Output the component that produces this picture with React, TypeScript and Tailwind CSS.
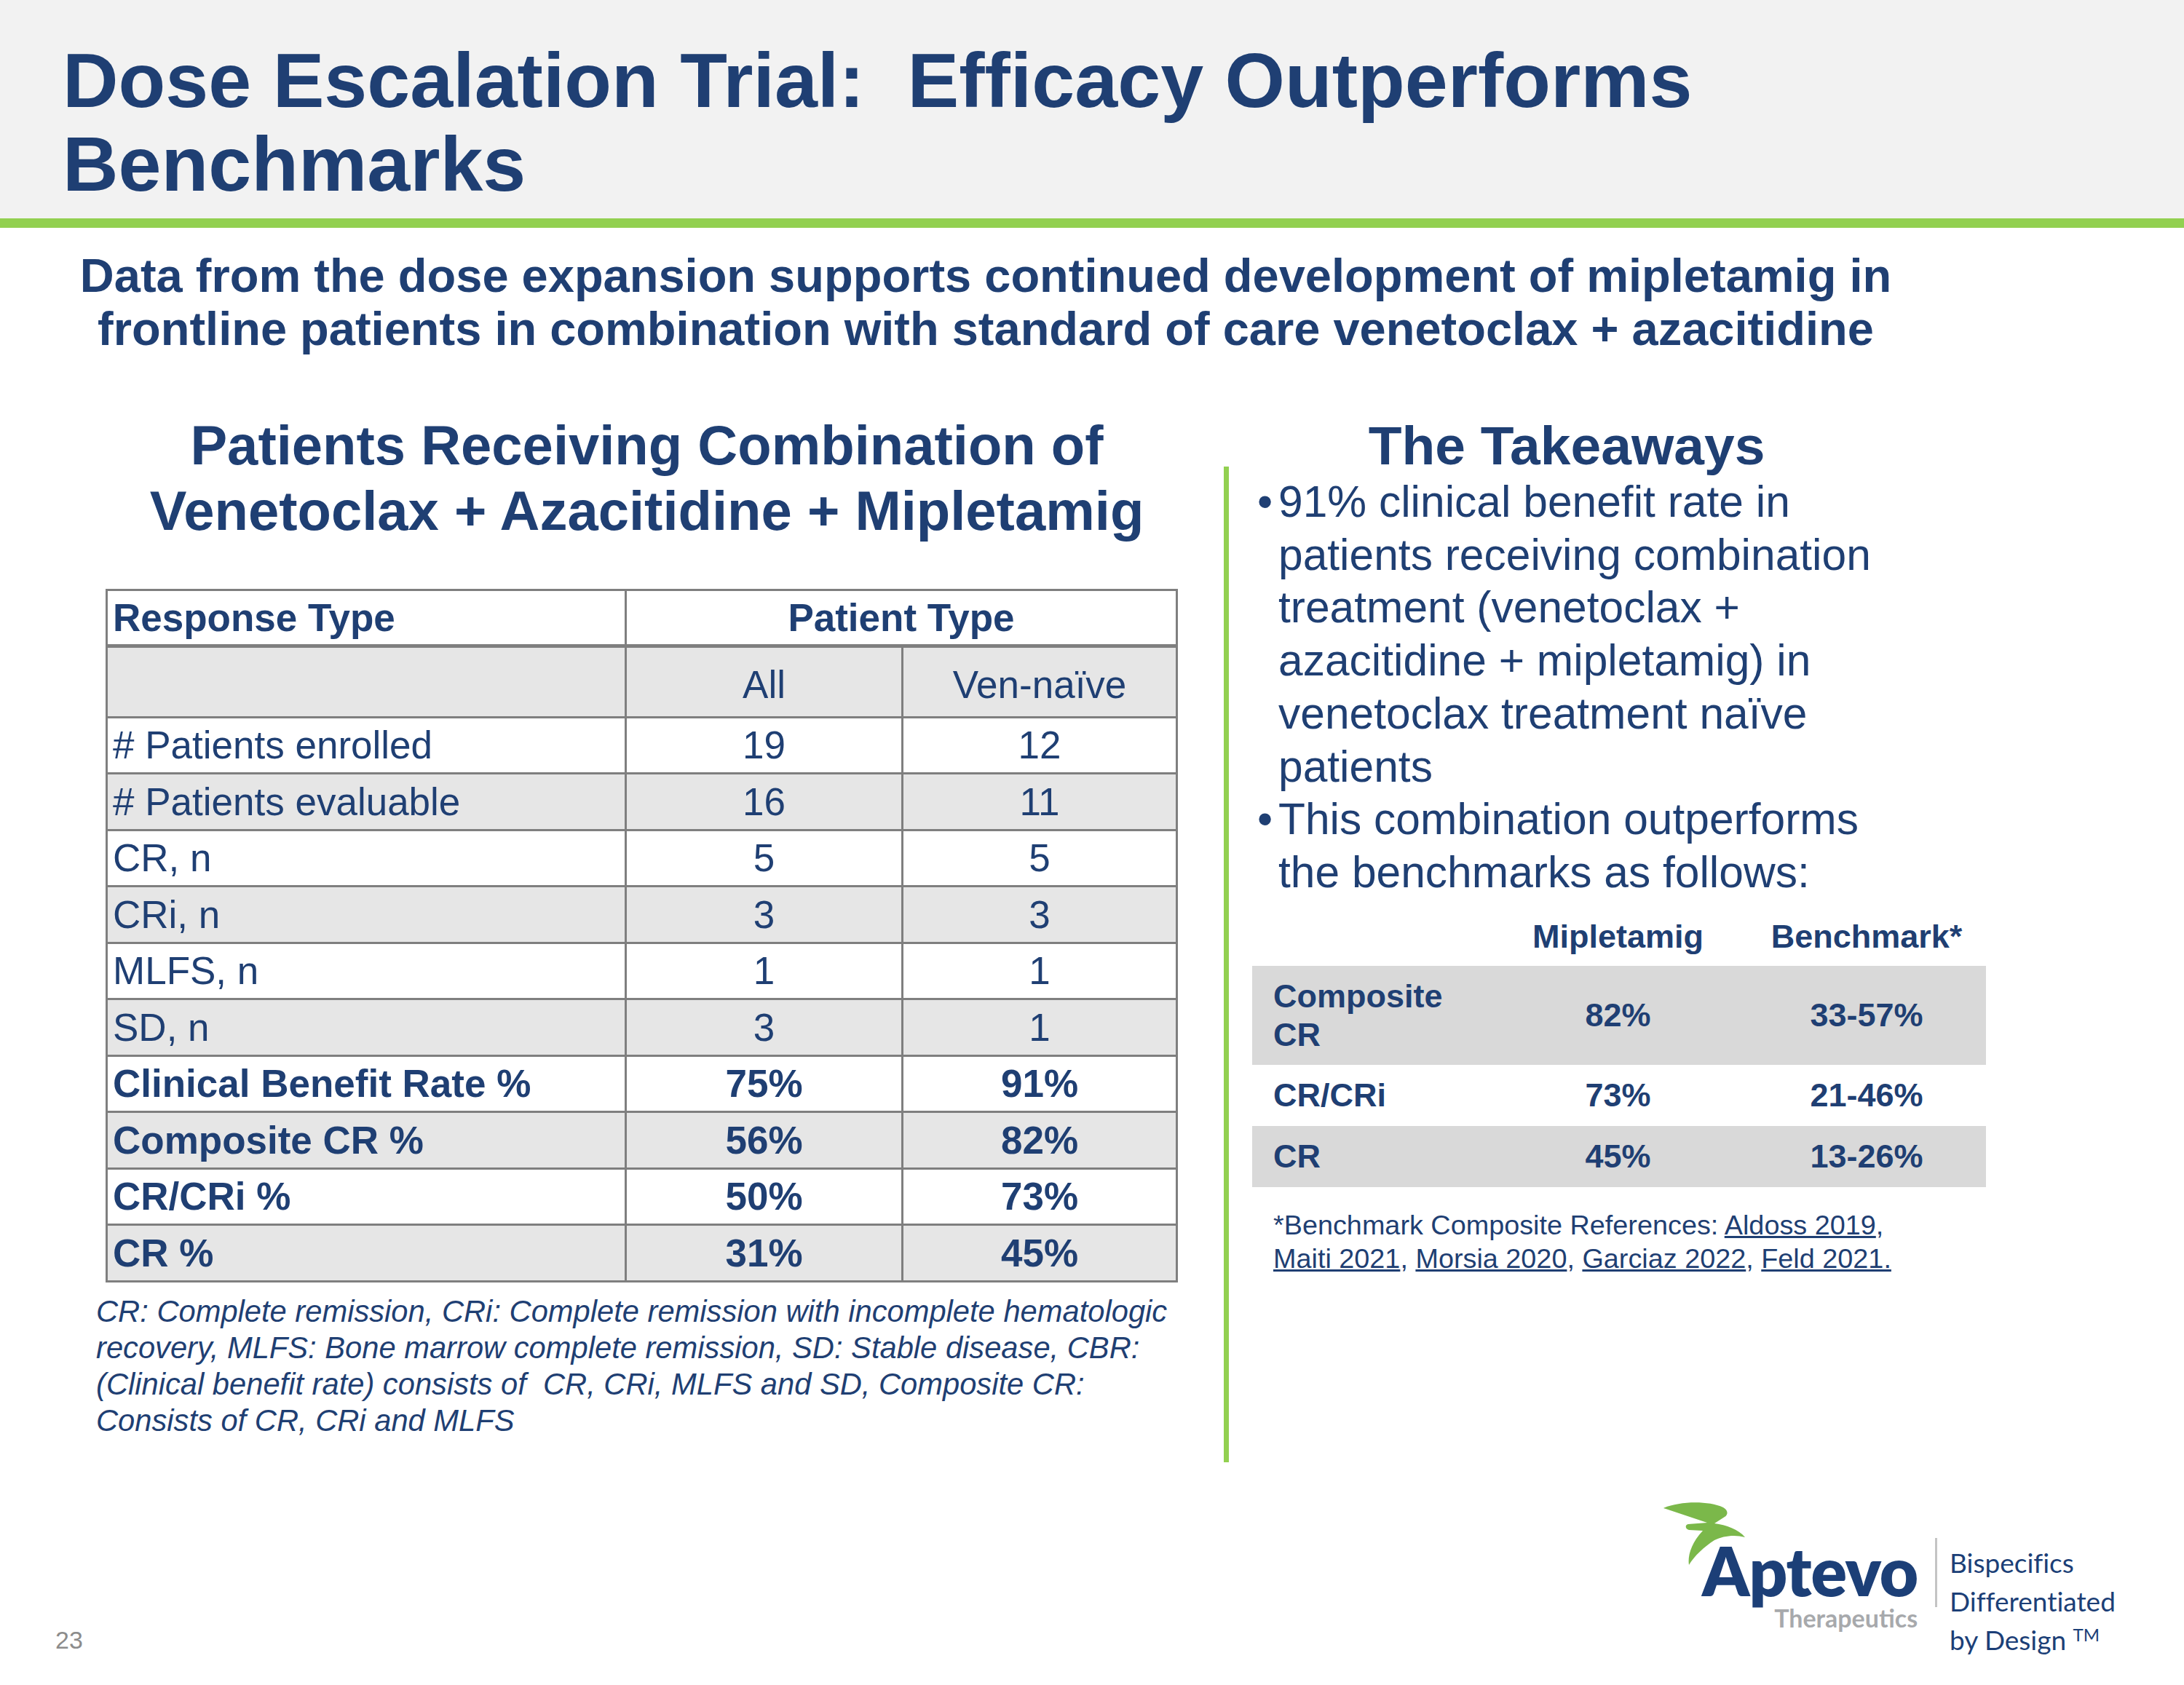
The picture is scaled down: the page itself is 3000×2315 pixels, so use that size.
import React from "react";

const rows: { label: string; all: string; ven: string; bold?: boolean }[] = [
  { label: "# Patients enrolled", all: "19", ven: "12" },
  { label: "# Patients evaluable", all: "16", ven: "11" },
  { label: "CR, n", all: "5", ven: "5" },
  { label: "CRi, n", all: "3", ven: "3" },
  { label: "MLFS, n", all: "1", ven: "1" },
  { label: "SD, n", all: "3", ven: "1" },
  { label: "Clinical Benefit Rate %", all: "75%", ven: "91%", bold: true },
  { label: "Composite CR %", all: "56%", ven: "82%", bold: true },
  { label: "CR/CRi %", all: "50%", ven: "73%", bold: true },
  { label: "CR %", all: "31%", ven: "45%", bold: true },
];

function Swoosh() {
  return (
    <svg
      viewBox="0 0 130 110"
      className="absolute left-[-10px] top-[-13px] w-[130px] h-[110px]"
      aria-hidden="true"
    >
      <path
        fill="#7bb84a"
        d="M10 22 C30 13 70 11 92 21 C99 25 99 31 94 34 L80 43 C96 45 113 51 122 62 C108 58 92 60 80 66 C66 75 52 88 45 100 C43 88 48 70 64 53 L45 52 C40 51 39 45 44 44 L70 42 Z"
      />
    </svg>
  );
}

export default function App() {
  return (
    <div className="w-[3000px] h-[2315px] bg-white flex flex-col overflow-hidden font-['Liberation_Sans',Arial,sans-serif] text-[#1f3f73]">
      {/* Header */}
      <div className="h-[300px] bg-[#f2f2f2] pt-[53px] pl-[86px]">
        <h1 className="text-[106px] leading-[115px] font-bold">
          Dose Escalation Trial:{"\u00a0"} Efficacy Outperforms
          <br />
          Benchmarks
        </h1>
      </div>
      <div className="h-[13px] bg-[#92d050]" />

      {/* Subtitle */}
      <p className="mt-[29px] ml-[100px] w-[2508px] text-center text-[65px] leading-[73px] font-bold whitespace-nowrap">
        Data from the dose expansion supports continued development of mipletamig in
        <br />
        frontline patients in combination with standard of care venetoclax + azacitidine
      </p>

      {/* Main */}
      <div className="mt-[79px] flex">
        {/* Left column */}
        <div className="w-[1681px] pl-[132px]">
          <h2 className="ml-[13px] w-[1473px] pl-[14px] text-center text-[76px] leading-[90px] font-bold whitespace-nowrap">
            Patients Receiving Combination of
            <br />
            Venetoclax + Azacitidine + Mipletamig
          </h2>

          <div className="mt-[62px] ml-[13px] w-[1473px] border-[3px] border-b-0 border-[#7f7f7f] text-[53px]">
            <div className="flex h-[78px] border-b-[5px] border-[#7f7f7f] font-bold">
              <div className="w-[713px] border-r-[3px] border-[#7f7f7f] pl-[7px] flex items-center">
                Response Type
              </div>
              <div className="flex-1 flex items-center justify-center">Patient Type</div>
            </div>
            <div className="flex h-[97px] border-b-[3px] border-[#7f7f7f] bg-[#e6e6e6]">
              <div className="w-[713px] border-r-[3px] border-[#7f7f7f]" />
              <div className="w-[380px] border-r-[3px] border-[#7f7f7f] flex items-center justify-center pt-[8px]">
                All
              </div>
              <div className="flex-1 flex items-center justify-center pt-[8px]">Ven-naïve</div>
            </div>
            {rows.map((r, i) => (
              <div
                key={r.label}
                className={
                  "flex border-b-[3px] border-[#7f7f7f] " +
                  (i % 2 === 1 ? "h-[78px] bg-[#e6e6e6] " : "h-[77px] bg-white ") +
                  (r.bold ? "font-bold" : "font-normal")
                }
              >
                <div className="w-[713px] border-r-[3px] border-[#7f7f7f] pl-[7px] flex items-center whitespace-nowrap">
                  {r.label}
                </div>
                <div className="w-[380px] border-r-[3px] border-[#7f7f7f] flex items-center justify-center">
                  {r.all}
                </div>
                <div className="flex-1 flex items-center justify-center">{r.ven}</div>
              </div>
            ))}
          </div>

          <p className="mt-[15px] italic text-[41.7px] leading-[50px] whitespace-nowrap">
            CR: Complete remission, CRi: Complete remission with incomplete hematologic
            <br />
            recovery, MLFS: Bone marrow complete remission, SD: Stable disease, CBR:
            <br />
            (Clinical benefit rate) consists of{"\u00a0"} CR, CRi, MLFS and SD, Composite CR:
            <br />
            Consists of CR, CRi and MLFS
          </p>
        </div>

        {/* Divider */}
        <div className="mt-[74px] h-[1368px] w-[7px] bg-[#92d050]" />

        {/* Right column */}
        <div className="pl-[32px]">
          <h2 className="w-[864px] text-center text-[75px] leading-[90px] font-bold">
            The Takeaways
          </h2>
          <div className="-mt-[4px] pl-[7px] text-[60.5px] leading-[72.7px] whitespace-nowrap">
            <div className="flex">
              <span className="w-[29px] shrink-0">•</span>
              <span>
                91% clinical benefit rate in
                <br />
                patients receiving combination
                <br />
                treatment (venetoclax +
                <br />
                azacitidine + mipletamig) in
                <br />
                venetoclax treatment naïve
                <br />
                patients
              </span>
            </div>
            <div className="flex">
              <span className="w-[29px] shrink-0">•</span>
              <span>
                This combination outperforms
                <br />
                the benchmarks as follows:
              </span>
            </div>
          </div>

          <div className="w-[1008px] text-[45px] leading-[53px] font-bold">
            <div className="flex h-[92px] items-end pb-[14px]">
              <div className="w-[325px]" />
              <div className="w-[355px] text-center">Mipletamig</div>
              <div className="w-[328px] text-center">Benchmark*</div>
            </div>
            <div className="flex h-[136px] items-center bg-[#d9d9d9]">
              <div className="w-[325px] pl-[29px]">
                Composite
                <br />
                CR
              </div>
              <div className="w-[355px] text-center">82%</div>
              <div className="w-[328px] text-center">33-57%</div>
            </div>
            <div className="flex h-[84px] items-center">
              <div className="w-[325px] pl-[29px]">CR/CRi</div>
              <div className="w-[355px] text-center">73%</div>
              <div className="w-[328px] text-center">21-46%</div>
            </div>
            <div className="flex h-[84px] items-center bg-[#d9d9d9]">
              <div className="w-[325px] pl-[29px]">CR</div>
              <div className="w-[355px] text-center">45%</div>
              <div className="w-[328px] text-center">13-26%</div>
            </div>
          </div>

          <p className="mt-[29px] pl-[29px] text-[37.8px] leading-[46px] whitespace-nowrap">
            *Benchmark Composite References: <span className="underline">Aldoss 2019</span>,
            <br />
            <span className="underline">Maiti 2021</span>, <span className="underline">Morsia 2020</span>,{" "}
            <span className="underline">Garciaz 2022</span>, <span className="underline">Feld 2021.</span>
          </p>
        </div>
      </div>

      {/* Footer */}
      <div className="mt-auto h-[252px] flex items-start">
        <div className="w-[2285px] pl-[76px] pt-[170px] text-[34px] leading-[40px] text-[#8c8c8c]">
          23
        </div>
        <div className="flex items-start">
          <div className="relative w-[345px] h-[190px] pt-[49px] pl-[53px] font-['Lato',sans-serif]">
            <Swoosh />
            <div className="relative flex flex-col items-end w-max">
              <span className="text-[92px] leading-none font-extrabold text-[#1c3f77] tracking-[-1px]">
                Aptevo
              </span>
              <span className="mt-[2px] text-[34px] leading-none font-bold text-[#a7a9ac]">
                Therapeutics
              </span>
            </div>
          </div>
          <div className="ml-[28px] mt-[50px] h-[95px] w-[3px] bg-[#c4c4c4]" />
          <div className="ml-[17px] mt-[57px] font-['Lato',sans-serif] text-[37px] leading-[53px] text-[#1c3f77] whitespace-nowrap [font-variant-ligatures:none]">
            Bispecifics
            <br />
            Differentiated
            <br />
            by Design <sup className="text-[24px]">TM</sup>
          </div>
        </div>
      </div>
    </div>
  );
}
